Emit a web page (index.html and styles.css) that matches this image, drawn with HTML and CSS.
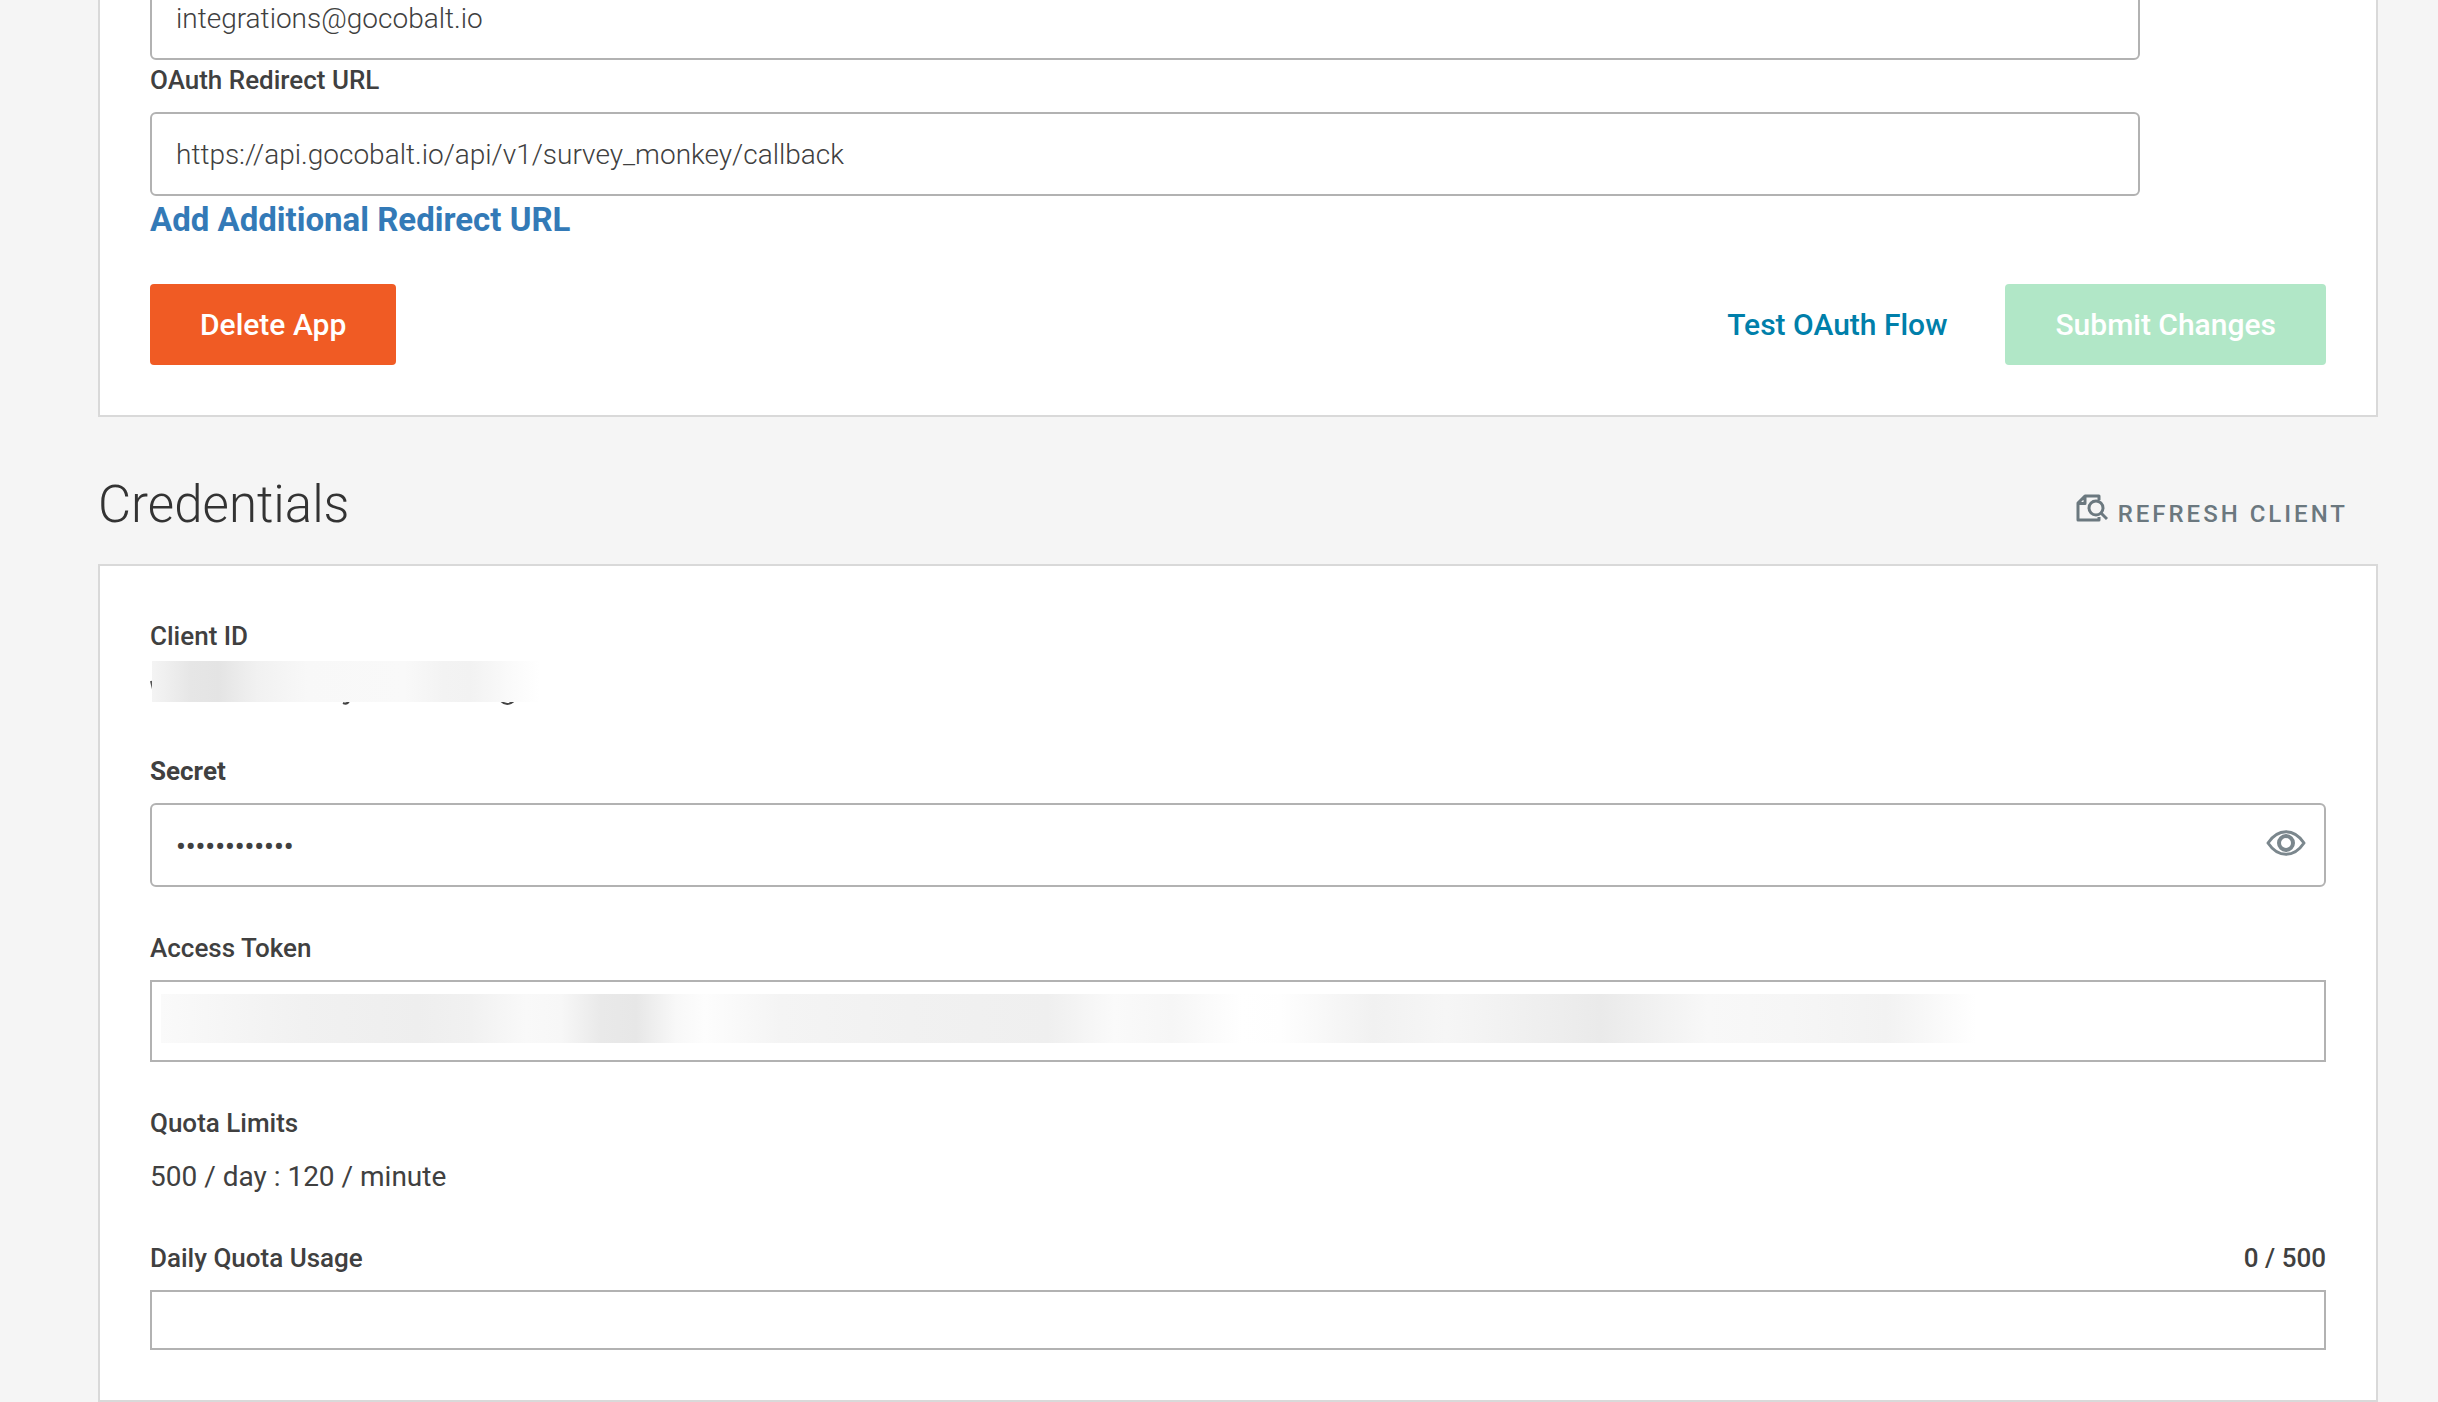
FILE: index.html
```html
<!DOCTYPE html>
<html lang="en">
<head>
<meta charset="utf-8">
<meta name="viewport" content="width=device-width, initial-scale=1">
<title>App settings</title>
<link rel="stylesheet" href="styles.css">
</head>
<body>
<main class="page">
  <form class="card card-scrolled">
    <input class="text-input narrow" type="email" aria-label="Email" value="integrations@gocobalt.io">
    <div class="field">
      <label class="label" for="redirect">OAuth Redirect URL</label>
      <input class="text-input narrow" id="redirect" type="text" value="https://api.gocobalt.io/api/v1/survey_monkey/callback">
    </div>
    <a class="add-link" href="#">Add Additional Redirect URL</a>
    <div class="actions">
      <button class="button button-danger" type="button">Delete App</button>
      <div class="actions-end">
        <a class="test-link" href="#">Test OAuth Flow</a>
        <button class="button button-submit" type="submit" disabled>Submit Changes</button>
      </div>
    </div>
  </form>

  <header class="section-head">
    <h2 class="title">Credentials</h2>
    <button class="refresh" type="button">
      <svg class="refresh-icon" width="32" height="28" viewBox="0 0 32 28" fill="none" stroke="currentColor" stroke-width="3" aria-hidden="true">
        <path d="M23 6V2H9L2 9V26H23V23M3 9.500H9V2" stroke-linejoin="round"/>
        <circle cx="20" cy="14" r="7"/>
        <path d="M25 19l6 6"/>
      </svg>
      <span>REFRESH CLIENT</span>
    </button>
  </header>

  <section class="card credentials">
    <div class="field">
      <span class="label">Client ID</span>
      <div class="value">
        <svg class="redacted-id" width="390" height="46" viewBox="0 0 390 46" role="img" aria-label="Hidden client ID">
          <defs>
            <linearGradient id="haze">
              <stop offset="0" stop-color="#f4f4f4"/>
              <stop offset=".1" stop-color="#e6e6e6"/>
              <stop offset=".17" stop-color="#e4e4e4"/>
              <stop offset=".27" stop-color="#f1f1f1"/>
              <stop offset=".4" stop-color="#f8f8f8"/>
              <stop offset=".65" stop-color="#f9f9f9"/>
              <stop offset=".75" stop-color="#f3f3f3"/>
              <stop offset=".82" stop-color="#f2f2f2"/>
              <stop offset=".92" stop-color="#fafafa"/>
              <stop offset="1" stop-color="#fff"/>
            </linearGradient>
          </defs>
          <path d="M1 20l2 8" stroke="#555" stroke-width="2"/>
          <path d="M193 42q4 2 6-2M351 40q6 6 13 0" fill="none" stroke="#444" stroke-width="2"/>
          <rect x="2" y="0" width="388" height="41" fill="url(#haze)"/>
        </svg>
      </div>
    </div>
    <div class="field">
      <label class="label label-strong" for="secret">Secret</label>
      <div class="secret">
        <input class="secret-input" id="secret" type="password" value="xxxxxxxxxxxx">
        <button class="reveal" type="button" aria-label="Show secret">
          <svg width="40" height="26" viewBox="0 0 40 26" fill="none" stroke="currentColor" aria-hidden="true">
            <path d="M2 13C12-2 28-2 38 13C28 28 12 28 2 13Z" stroke-width="3" stroke-linejoin="round"/>
            <circle cx="20" cy="13" r="7" stroke-width="4"/>
          </svg>
        </button>
      </div>
    </div>
    <div class="field">
      <label class="label" for="token">Access Token</label>
      <input class="token" id="token" type="text" readonly>
    </div>
    <div class="field">
      <span class="label">Quota Limits</span>
      <span class="value">500 / day : 120 / minute</span>
    </div>
    <div class="field">
      <div class="usage-head">
        <span class="label" id="usage-label">Daily Quota Usage</span>
        <span class="label">0 / 500</span>
      </div>
      <div class="usage-bar" role="progressbar" aria-labelledby="usage-label" aria-valuemin="0" aria-valuemax="500" aria-valuenow="0"></div>
    </div>
  </section>
</main>
</body>
</html>
```
FILE: styles.css
```css
* {
  box-sizing: border-box;
}

body {
  margin: 0;
  overflow-x: hidden;
  background: #f5f5f5;
  color: #404040;
  font-family: Roboto, "Liberation Sans", sans-serif;
  font-size: 28px;
}

input,
button {
  color: inherit;
  font: inherit;
}

a {
  text-decoration: none;
}

.page {
  padding: 0 60px 0 98px;
}

.card {
  display: flex;
  flex-direction: column;
  padding: 50px;
  border: 2px solid #d9d9d9;
  background: #fff;
}

.card-scrolled {
  margin-top: -24px;
  padding-top: 0;
  border-top: 0;
}

.credentials {
  gap: 41px;
}

.field {
  display: flex;
  flex-direction: column;
  gap: 12px;
}

.label {
  font-size: 26px;
  font-weight: 500;
  line-height: 40px;
}

.label-strong {
  font-weight: 700;
}

.text-input,
.secret {
  height: 84px;
  border: 2px solid #b2b2b2;
  border-radius: 6px;
  background: #fff;
}

.text-input {
  padding: 0 24px;
  font-weight: 300;
}

.narrow {
  width: calc(100% - 186px);
}

.add-link {
  align-self: flex-start;
  color: #337ab7;
  font-size: 33px;
  font-weight: 700;
  line-height: 48px;
}

.actions {
  display: flex;
  align-items: center;
  justify-content: space-between;
  margin-top: 40px;
}

.actions-end {
  display: flex;
  align-items: center;
  gap: 58px;
}

.button {
  padding: 20px 50px;
  border: 0;
  border-radius: 4px;
  color: #fff;
  font-size: 30px;
  font-weight: 500;
  line-height: 41px;
}

.button-danger {
  background: #f05b24;
}

.button-submit {
  background: #b1e7c7;
}

.test-link {
  color: #007faa;
  font-size: 30px;
  font-weight: 500;
}

.section-head {
  display: flex;
  align-items: baseline;
  justify-content: space-between;
  padding: 58px 30px 29px 0;
}

.title {
  margin: 0;
  color: #333;
  font-size: 51px;
  font-weight: 300;
  line-height: 60px;
}

.refresh {
  display: flex;
  align-items: baseline;
  gap: 10px;
  padding: 0;
  border: 0;
  background: none;
  color: #6b787f;
  font-size: 24px;
  font-weight: 500;
  letter-spacing: 3px;
}

.value {
  height: 42px;
  line-height: 44px;
}

.redacted-id {
  display: block;
  margin-top: -7px;
}

.secret {
  display: flex;
  align-items: center;
  padding: 0 18px 0 24px;
}

.secret-input {
  flex: 1;
  min-width: 0;
  padding: 2px 0 0;
  border: 0;
  outline: 0;
  background: none;
  font-weight: 500;
}

.reveal {
  display: flex;
  padding: 0 0 4px;
  border: 0;
  background: none;
  color: #7b878d;
}

.token {
  height: 82px;
  border: 2px solid #b2b2b2;
  border-radius: 0;
  background: #fff linear-gradient(90deg,
    #fafafa 0, #f4f4f4 90px, #f1f1f1 142px, #eee 257px, #f1f1f1 310px,
    #f9f9f9 365px, #f7f7f7 400px, #e9e9e9 440px, #e7e7e7 475px,
    #f8f8f8 515px, #fdfdfd 544px, #f4f4f4 620px, #f1f1f1 748px,
    #efefef 887px, #fafafa 954px, #f6f6f6 1011px, #fff 1081px,
    #fefefe 1120px, #f1f1f1 1212px, #f6f6f6 1285px, #eaeaea 1439px,
    #f8f8f8 1547px, #f6f6f6 1630px, #f2f2f2 1725px, #fff 1815px)
    9px 12px / 1820px 49px no-repeat;
}

.usage-head {
  display: flex;
  justify-content: space-between;
}

.usage-bar {
  height: 60px;
  border: 2px solid #b2b2b2;
}
```
